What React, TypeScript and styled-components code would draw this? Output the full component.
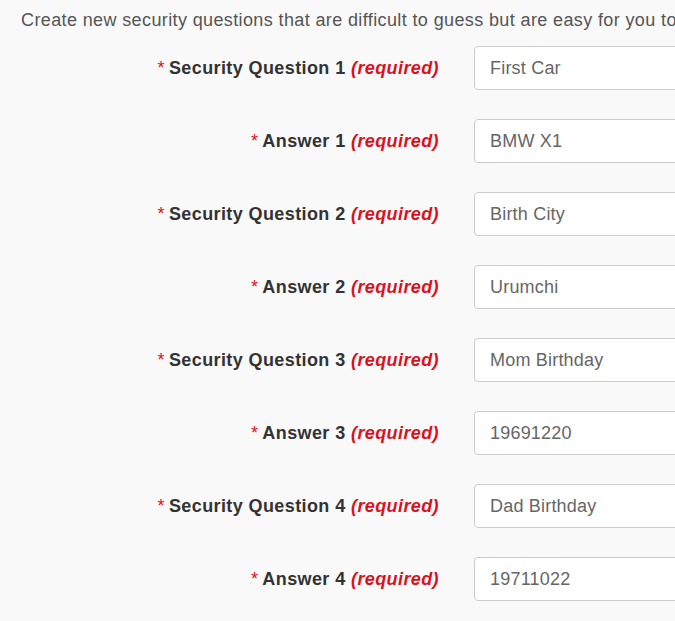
import React from "react";
import styled, { createGlobalStyle } from "styled-components";

const Global = createGlobalStyle`
  html, body { margin: 0; padding: 0; background: #f9f9f9; }
  body { font-family: "Liberation Sans", Arial, sans-serif; overflow: hidden; }
`;

const Page = styled.div`
  width: 675px;
  height: 621px;
  overflow: hidden;
  background: #f9f9f9;
  box-sizing: border-box;
  padding: 10px 0 0 21px;
`;

const Intro = styled.p`
  margin: 0 0 16px 0;
  font-size: 18px;
  letter-spacing: 0.38px;
  line-height: 20px;
  color: #555;
  white-space: nowrap;
`;

const Form = styled.div`
  display: flex;
  flex-direction: column;
  gap: 29px;
`;

const Row = styled.div`
  display: grid;
  grid-template-columns: 418px 1fr;
  column-gap: 35px;
  align-items: center;
`;

const Label = styled.label`
  text-align: right;
  font-size: 18px;
  letter-spacing: 0.4px;
  font-weight: bold;
  color: #333;
  white-space: nowrap;
`;

const Star = styled.span`
  color: #d8131d;
  font-weight: normal;
  margin-right: 4px;
`;

const Req = styled.em`
  color: #d8131d;
  font-weight: bold;
`;

const Input = styled.input`
  box-sizing: border-box;
  width: 260px;
  height: 44px;
  padding: 0 15px;
  border: 1px solid #ccc;
  border-radius: 4px;
  background: #fff;
  font-family: "Liberation Sans", Arial, sans-serif;
  font-size: 18px;
  letter-spacing: 0.2px;
  color: #666;
  outline: none;
`;

const rows = [
  ["Security Question 1", "First Car"],
  ["Answer 1", "BMW X1"],
  ["Security Question 2", "Birth City"],
  ["Answer 2", "Urumchi"],
  ["Security Question 3", "Mom Birthday"],
  ["Answer 3", "19691220"],
  ["Security Question 4", "Dad Birthday"],
  ["Answer 4", "19711022"],
];

export default function App() {
  return (
    <Page>
      <Global />
      <Intro>
        Create new security questions that are difficult to guess but are easy for you to remember.
      </Intro>
      <Form>
        {rows.map(([label, value]) => (
          <Row key={label}>
            <Label>
              <Star>*</Star>
              {label} <Req>(required)</Req>
            </Label>
            <Input defaultValue={value} readOnly />
          </Row>
        ))}
      </Form>
    </Page>
  );
}
